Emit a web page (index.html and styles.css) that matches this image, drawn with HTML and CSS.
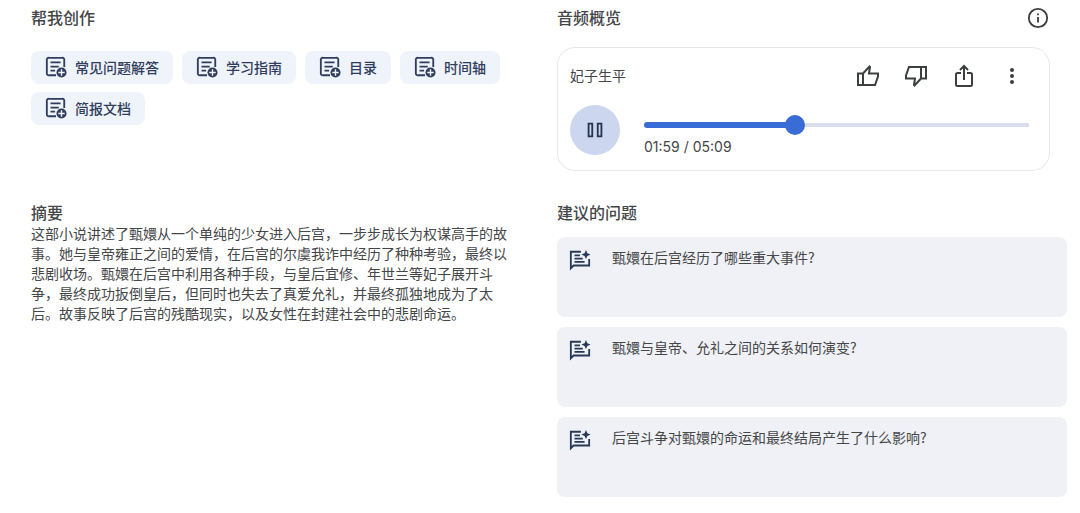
FILE: index.html
```html
<!DOCTYPE html>
<html lang="zh-CN">
<head>
  <meta charset="UTF-8">
  <meta name="viewport" content="width=device-width, initial-scale=1.0">
  <title>笔记本指南</title>
  <link rel="stylesheet" href="styles.css">
</head>
<body>

  <!-- Shared icons -->
  <svg class="sprite" aria-hidden="true">
    <symbol id="icon-note" viewBox="0 0 24 24">
      <path d="M12 21H4.500A2 2 0 0 1 2 19V4.500A2 2 0 0 1 4.500 2H18.500A2 2 0 0 1 21 4.500V12" fill="none" stroke="currentColor" stroke-width="2"/>
      <path d="M6 7h11M6 11.500h9M6 16h5" fill="none" stroke="currentColor" stroke-width="2"/>
      <circle cx="18" cy="18" r="5.5" fill="currentColor"/>
      <path d="M18 14.5v7M14.500 18h7" stroke="#eff3fa" stroke-width="1.5"/>
    </symbol>
    <symbol id="icon-chat" viewBox="0 0 24 24">
      <path d="M13 3H2v18l3-3h17v-7" fill="none" stroke="currentColor" stroke-width="2"/>
      <path d="M6 7h6M6 10.5h9M6 14h11" fill="none" stroke="currentColor" stroke-width="2"/>
      <path d="M18.500 1l1.500 3.500L23.500 6 20 7.500 18.500 11 17 7.500 13.500 6 17 4.500z" fill="currentColor"/>
    </symbol>
  </svg>

  <main class="guide">
    <section class="create">
      <h2>帮我创作</h2>
      <div class="chips">
        <button class="chip"><svg><use href="#icon-note"/></svg>常见问题解答</button>
        <button class="chip"><svg><use href="#icon-note"/></svg>学习指南</button>
        <button class="chip"><svg><use href="#icon-note"/></svg>目录</button>
        <button class="chip"><svg><use href="#icon-note"/></svg>时间轴</button>
        <button class="chip"><svg><use href="#icon-note"/></svg>简报文档</button>
      </div>
    </section>

    <section class="audio">
      <div class="audio-title">
        <h2>音频概览</h2>
        <button class="icon-btn small" aria-label="信息">
          <svg viewBox="0 0 24 24" fill="none" stroke="currentColor" stroke-width="2"><circle cx="12" cy="12" r="10"/><path d="M12 11v6M12 7v2"/></svg>
        </button>
      </div>
      <div class="player">
        <div class="player-top">
          <h3>妃子生平</h3>
          <div class="actions">
            <button class="icon-btn" aria-label="喜欢">
              <svg viewBox="0 0 24 24" fill="none" stroke="currentColor" stroke-width="2"><path d="M7 9.500l6.500-7 .5.500-1 6.500h9v3L19 21H2V9.500h5zV21"/></svg>
            </button>
            <button class="icon-btn" aria-label="不喜欢">
              <svg viewBox="0 0 24 24" fill="none" stroke="currentColor" stroke-width="2"><path d="M17 14.500l-6.500 7-.5-.5 1-6.500H2v-3L5 3h17v11.500h-5zV3"/></svg>
            </button>
            <button class="icon-btn" aria-label="分享">
              <svg viewBox="0 0 24 24" fill="none" stroke="currentColor" stroke-width="2"><path d="M9 9H5.500Q4 9 4 10.500v10Q4 22 5.500 22h13q1.500 0 1.500-1.500v-10Q20 9 18.500 9H15M12 16V2.500M8 6l4-4 4 4"/></svg>
            </button>
            <button class="icon-btn" aria-label="更多">
              <svg viewBox="0 0 24 24" fill="currentColor"><circle cx="12" cy="6" r="2"/><circle cx="12" cy="12" r="2"/><circle cx="12" cy="18" r="2"/></svg>
            </button>
          </div>
        </div>
        <div class="player-bar">
          <button class="pause" aria-label="暂停">
            <svg viewBox="0 0 24 24" fill="none" stroke="currentColor" stroke-width="2"><path d="M5 5h4v14H5zM15 5h4v14h-4z"/></svg>
          </button>
          <div class="progress">
            <input type="range" id="seek" min="0" max="309" value="119" aria-label="播放进度" style="--played: 38.5%">
            <label class="time" for="seek">01:59 / 05:09</label>
          </div>
        </div>
      </div>
    </section>

    <section class="summary">
      <h2>摘要</h2>
      <p>这部小说讲述了甄嬛从一个单纯的少女进入后宫，一步步成长为权谋高手的故事。她与皇帝雍正之间的爱情，在后宫的尔虞我诈中经历了种种考验，最终以悲剧收场。甄嬛在后宫中利用各种手段，与皇后宜修、年世兰等妃子展开斗争，最终成功扳倒皇后，但同时也失去了真爱允礼，并最终孤独地成为了太后。故事反映了后宫的残酷现实，以及女性在封建社会中的悲剧命运。</p>
    </section>

    <section class="questions">
      <h2>建议的问题</h2>
      <div class="question-list">
        <button class="question"><svg><use href="#icon-chat"/></svg>甄嬛在后宫经历了哪些重大事件?</button>
        <button class="question"><svg><use href="#icon-chat"/></svg>甄嬛与皇帝、允礼之间的关系如何演变?</button>
        <button class="question"><svg><use href="#icon-chat"/></svg>后宫斗争对甄嬛的命运和最终结局产生了什么影响?</button>
      </div>
    </section>
  </main>

</body>
</html>
```
FILE: styles.css
```css
* {
  box-sizing: border-box;
}

body {
  margin: 0;
  background: #fff;
  color: #444648;
  font-family: "Noto Sans CJK SC", sans-serif;
  font-size: 14px;
  line-height: 20px;
}

button {
  border: none;
  font: inherit;
  color: inherit;
  cursor: pointer;
}

h2 {
  margin: 0;
  font-size: 16px;
  font-weight: 500;
  line-height: 22px;
}

.sprite {
  display: none;
}

.guide {
  display: grid;
  grid-template-columns: 1fr 1fr;
  column-gap: 16px;
  row-gap: 30px;
  padding: 6px 13px 16px 31px;
}

/* Create */
.chips {
  display: flex;
  flex-wrap: wrap;
  gap: 8px 9px;
  margin-top: 23px;
}

.chip {
  display: flex;
  align-items: center;
  gap: 8px;
  height: 33px;
  padding: 0 14px 2px;
  border-radius: 8px;
  background: #eff3fa;
  color: #303d5c;
  font-weight: 500;
}

.chip svg {
  width: 22px;
  height: 22px;
}

/* Audio overview */
.audio {
  padding-right: 17px;
}

.audio-title {
  display: flex;
  justify-content: space-between;
}

.icon-btn {
  display: flex;
  align-items: center;
  justify-content: center;
  width: 40px;
  height: 40px;
  padding: 0;
  border-radius: 50%;
  background: none;
  color: #3c3e40;
}

.icon-btn svg {
  width: 24px;
  height: 24px;
}

.icon-btn.small {
  width: 24px;
  height: 24px;
}

.icon-btn.small svg {
  width: 22px;
  height: 22px;
}

.player {
  margin-top: 17px;
  padding: 8px 17px 13px 12px;
  border: 1px solid #e6e7ea;
  border-radius: 18px;
}

.player-top {
  display: flex;
  align-items: center;
  justify-content: space-between;
}

.player-top h3 {
  margin: 0;
  padding-bottom: 2px;
  font-size: 14px;
  font-weight: 400;
}

.actions {
  display: flex;
  gap: 8px;
}

.player-bar {
  display: flex;
  gap: 24px;
  margin-top: 9px;
  padding-right: 3px;
}

.pause {
  display: flex;
  align-items: center;
  justify-content: center;
  flex: none;
  width: 50px;
  height: 50px;
  padding: 0;
  border-radius: 50%;
  background: #ccd6ee;
  color: #26344f;
}

.pause svg {
  width: 22px;
  height: 22px;
}

.progress {
  flex: 1;
}

.progress input {
  display: block;
  width: 100%;
  height: 20px;
  margin: 10px 0 2px;
  appearance: none;
  background: none;
}

.progress input::-webkit-slider-runnable-track {
  height: 6px;
  border-radius: 3px;
  background:
    linear-gradient(#396cd5, #396cd5) left / var(--played) 6px no-repeat,
    linear-gradient(#d9dde9, #d9dde9) center / 100% 4px no-repeat;
}

.progress input::-webkit-slider-thumb {
  appearance: none;
  width: 20px;
  height: 20px;
  margin-top: -7px;
  border-radius: 50%;
  background: #396cd5;
}

.time {
  display: block;
  font-family: Inter, sans-serif;
}

/* Summary */
.summary p {
  max-width: 483px;
  margin: 0;
}

/* Suggested questions */
.question-list {
  display: flex;
  flex-direction: column;
  gap: 10px;
  margin-top: 14px;
}

.question {
  display: flex;
  align-items: flex-start;
  gap: 21px;
  min-height: 80px;
  padding: 10px 12px;
  border-radius: 8px;
  background: #f0f1f6;
  text-align: left;
}

.question svg {
  flex: none;
  width: 22px;
  height: 22px;
  margin-top: 2px;
  color: #263a58;
}
```
